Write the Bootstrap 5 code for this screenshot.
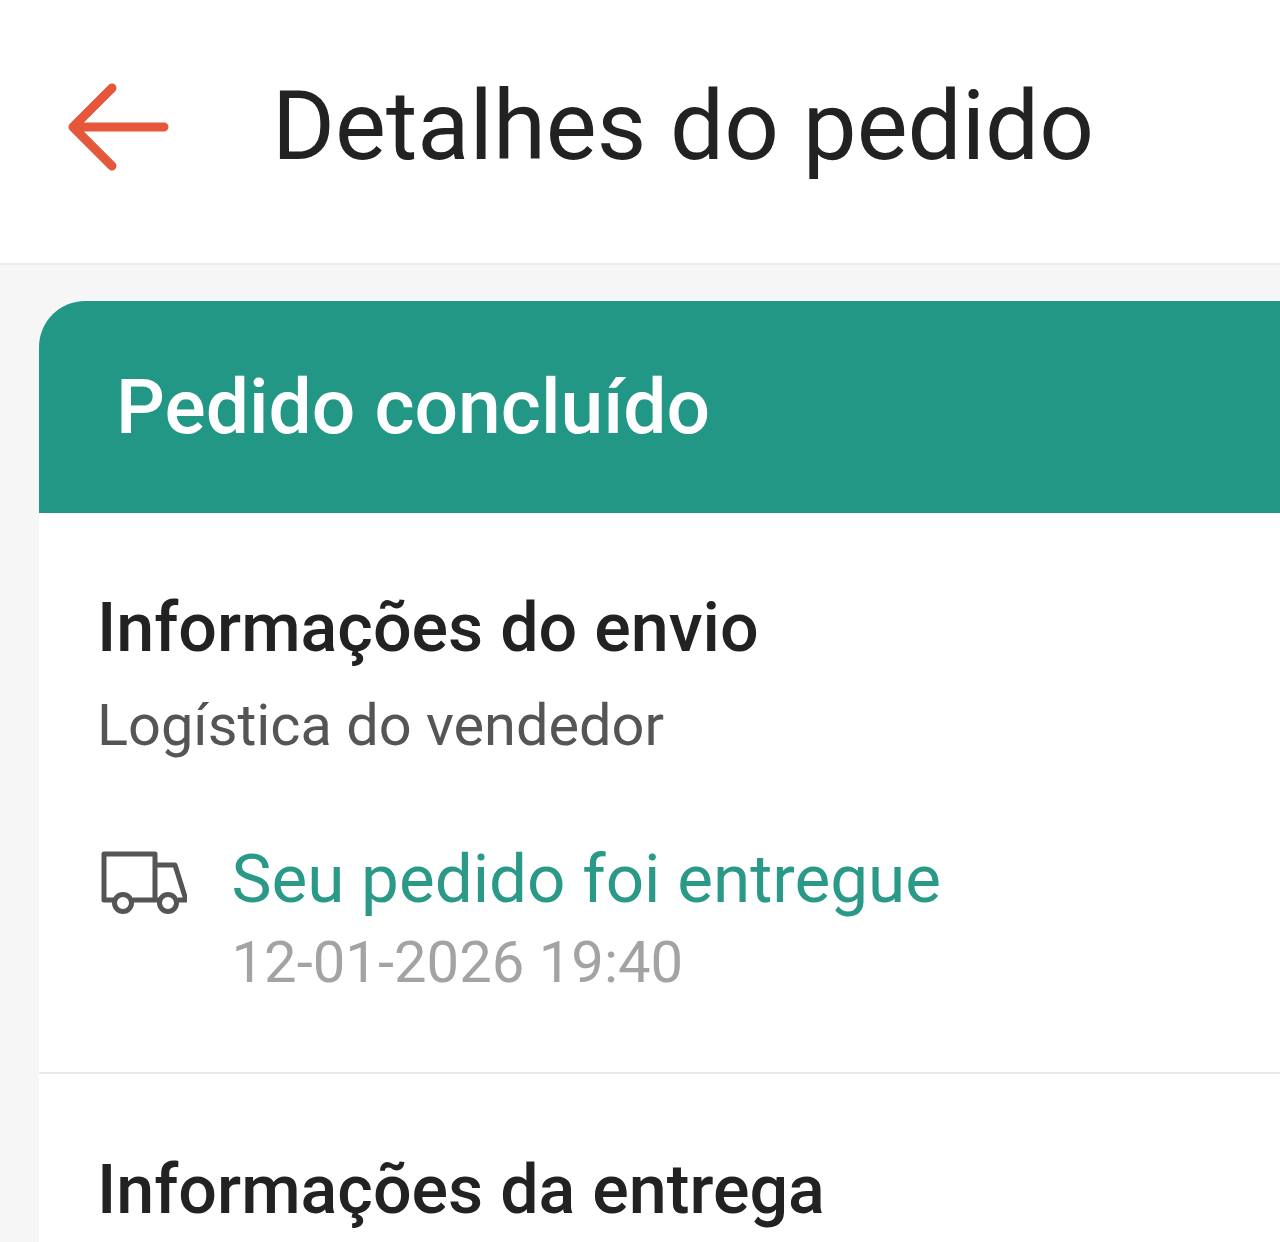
<!DOCTYPE html>
<html lang="pt"><head><meta charset="utf-8">
<link href="https://cdn.jsdelivr.net/npm/bootstrap@5.3.0/dist/css/bootstrap.min.css" rel="stylesheet">
<style>
html,body{height:100%;overflow:hidden}
body{background:#f6f6f6;font-family:Roboto,"Liberation Sans",sans-serif;color:#222;display:flex;flex-direction:column}
.topbar{height:265px;flex:none;background:#fff;border-bottom:2px solid #ececec;padding:0 0 11px 67px;gap:103px}
.topbar h1{font-size:96px;font-weight:400;margin:0;color:#222;line-height:1}
.topbar svg{margin-top:1px}
.sheet{margin:36px 0 0 39px;background:#fff;flex:1;border-radius:46px 0 0 0}
.statusbar{height:212px;background:#239786;border-radius:46px 0 0 0;padding-left:77px;color:#fff;font-size:76.8px;font-weight:500;line-height:1}
.sect{padding:0 0 0 58px}
.sect-title{font-size:68.2px;font-weight:500;line-height:1;color:#222;margin:0}
.sect-sub{font-size:57.7px;color:#555;line-height:1;margin-top:35px}
.ship{padding-top:81px;height:561px;border-bottom:2px solid #e8e8e8}
.ev{gap:44.5px;margin-top:90px}
.ev-t{font-size:67.4px;color:#2a9987;line-height:1}
.ev-d{font-size:58px;color:#a3a3a3;line-height:1;margin-top:21px}
.ev svg{margin-top:5px}
.deliv{padding-top:82px}
</style></head><body>
<div class="topbar d-flex align-items-center">
<svg width="102" height="88" viewBox="0 0 102 88" fill="none" stroke="#e5573a" stroke-width="9" stroke-linecap="round" stroke-linejoin="round"><path d="M97 44H6M45 5 6 44l39 39"/></svg>
<h1>Detalhes do pedido</h1>
</div>
<div class="sheet">
<div class="statusbar d-flex align-items-center">Pedido concluído</div>
<div class="sect ship">
<h2 class="sect-title">Informações do envio</h2>
<div class="sect-sub">Logística do vendedor</div>
<div class="ev d-flex">
<svg width="90" height="64" viewBox="-3 0 90 64" fill="none" stroke="#555" stroke-width="5" stroke-linejoin="round"><path d="M14 50H4V4h51v46H33M55 15h20l11 35h-8M55 50h4"/><circle cx="23" cy="53" r="8.5"/><circle cx="68" cy="53" r="8.5"/></svg>
<div><div class="ev-t">Seu pedido foi entregue</div><div class="ev-d">12-01-2026 19:40</div></div>
</div>
</div>
<div class="sect deliv"><h2 class="sect-title">Informações da entrega</h2></div>
</div>
<script src="https://cdn.jsdelivr.net/npm/bootstrap@5.3.0/dist/js/bootstrap.bundle.min.js"></script>
</body></html>
